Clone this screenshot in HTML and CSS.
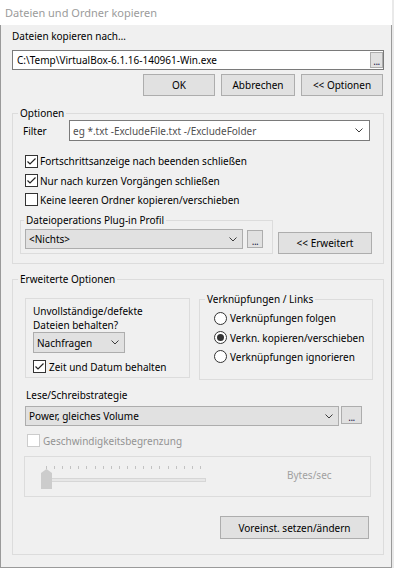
FILE: index.html
```html
<!DOCTYPE html>
<html lang="de">
<head>
<meta charset="utf-8">
<title>Dateien und Ordner kopieren</title>
<link rel="stylesheet" href="styles.css">
</head>
<body>
<div class="window">
  <div class="titlebar">Dateien und Ordner kopieren</div>
  <div class="dialog">
    <div class="top-label">Dateien kopieren nach…</div>
    <div class="pathbox">
      <span class="path-text">C:\Temp\VirtualBox-6.1.16-140961-Win.exe</span>
      <span class="mini-btn path-btn">...</span>
    </div>
    <div class="btn-row">
      <button class="btn btn-ok">OK</button>
      <button class="btn btn-cancel">Abbrechen</button>
      <button class="btn btn-opt">&lt;&lt; Optionen</button>
    </div>

    <fieldset class="group group-main">
      <legend>Optionen</legend>
      <div class="opts-body">
        <div class="filter-row">
          <span class="filter-label">Filter</span>
          <div class="combo edit filter-combo">
            <span class="combo-text placeholder">eg *.txt -ExcludeFile.txt -/ExcludeFolder</span>
            <svg class="chev" width="8" height="5" viewBox="0 0 8 5"><polyline points="0.5,0.5 4,4 7.5,0.5"/></svg>
          </div>
        </div>
        <div class="check-row row-a">
          <span class="cb"><svg width="11" height="11" viewBox="0 0 11 11"><polyline points="1.5,5.5 4,8 9.5,2.5"/></svg></span>
          <span>Fortschrittsanzeige nach beenden schließen</span>
        </div>
        <div class="check-row row-b">
          <span class="cb"><svg width="11" height="11" viewBox="0 0 11 11"><polyline points="1.5,5.5 4,8 9.5,2.5"/></svg></span>
          <span>Nur nach kurzen Vorgängen schließen</span>
        </div>
        <div class="check-row row-b">
          <span class="cb"></span>
          <span>Keine leeren Ordner kopieren/verschieben</span>
        </div>
        <div class="plugin-row">
          <fieldset class="group group-plugin">
            <legend>Dateioperations Plug-in Profil</legend>
            <div class="plugin-body">
              <div class="combo drop plugin-combo">
                <span class="combo-text">&lt;Nichts&gt;</span>
                <svg class="chev" width="8" height="5" viewBox="0 0 8 5"><polyline points="0.5,0.5 4,4 7.5,0.5"/></svg>
              </div>
              <span class="mini-btn plugin-btn">...</span>
            </div>
          </fieldset>
          <button class="btn btn-ext">&lt;&lt; Erweitert</button>
        </div>
      </div>
    </fieldset>

    <fieldset class="group group-main group-ext">
      <legend>Erweiterte Optionen</legend>
      <div class="ext-body">
        <div class="sub-row">
          <div class="box-keep">
            <div class="keep-text">Unvollständige/defekte<br>Dateien behalten?</div>
            <div class="combo drop keep-combo">
              <span class="combo-text">Nachfragen</span>
              <svg class="chev" width="8" height="5" viewBox="0 0 8 5"><polyline points="0.5,0.5 4,4 7.5,0.5"/></svg>
            </div>
            <div class="check-row row-keep">
              <span class="cb"><svg width="11" height="11" viewBox="0 0 11 11"><polyline points="1.5,5.5 4,8 9.5,2.5"/></svg></span>
              <span>Zeit und Datum behalten</span>
            </div>
          </div>
          <fieldset class="group group-links">
            <legend>Verknüpfungen / Links</legend>
            <div class="links-body">
              <div class="radio-row row-a"><span class="rb"></span><span>Verknüpfungen folgen</span></div>
              <div class="radio-row row-b"><span class="rb"><span class="rb-dot"></span></span><span>Verkn. kopieren/verschieben</span></div>
              <div class="radio-row row-b"><span class="rb"></span><span>Verknüpfungen ignorieren</span></div>
            </div>
          </fieldset>
        </div>
        <div class="strat-label">Lese/Schreibstrategie</div>
        <div class="strat-row">
          <div class="combo drop strat-combo">
            <span class="combo-text">Power, gleiches Volume</span>
            <svg class="chev" width="8" height="5" viewBox="0 0 8 5"><polyline points="0.5,0.5 4,4 7.5,0.5"/></svg>
          </div>
          <span class="mini-btn strat-btn">...</span>
        </div>
        <div class="check-row row-speed disabled">
          <span class="cb cb-disabled"></span>
          <span>Geschwindigkeitsbegrenzung</span>
        </div>
        <div class="slider-panel">
          <div class="slider">
            <div class="ticks"></div>
            <div class="track"></div>
            <svg class="thumb" width="11" height="20" viewBox="0 0 11 20"><polygon points="0,4 5.5,0 11,4 11,20 0,20"/></svg>
          </div>
          <span class="bytes">Bytes/sec</span>
        </div>
        <button class="btn btn-preset">Voreinst. setzen/ändern</button>
      </div>
    </fieldset>
  </div>
</div>
</body>
</html>
```

FILE: styles.css
```css
* {
  box-sizing: border-box;
}

html, body {
  margin: 0;
  padding: 0;
}

body {
  width: 394px;
  height: 568px;
  overflow: hidden;
  background: #e9e9e9;
  font-family: "Noto Sans", "Open Sans", sans-serif;
  font-size: 10px;
  line-height: 14px;
  color: #000;
}

.window {
  width: 392px;
  height: 568px;
  display: flex;
  flex-direction: column;
}

.titlebar {
  height: 25px;
  flex: none;
  background: #ffffff;
  color: #9b9b9b;
  font-size: 11px;
  line-height: 25px;
  padding-left: 5px;
}

.dialog {
  flex: 1;
  display: flex;
  flex-direction: column;
  background: #f0f0f0;
  border: 1px solid #9a9a9a;
  border-top: 0;
  padding: 4px 7px 0 11px;
}

.top-label {
  height: 14px;
}

.pathbox {
  margin-top: 7px;
  height: 20px;
  display: flex;
  align-items: center;
  background: #fff;
  border: 1px solid #7a7a7a;
  padding-left: 4px;
}

.path-text {
  flex: 1;
  white-space: nowrap;
}

.mini-btn {
  display: flex;
  justify-content: center;
  align-items: flex-end;
  background: #e1e1e1;
  border: 1px solid #adadad;
  color: #1a1a4a;
  font-size: 10px;
  line-height: 12px;
  letter-spacing: -0.5px;
}

.path-btn {
  width: 13px;
  height: 16px;
}

.btn-row {
  margin-top: 4px;
  display: flex;
  justify-content: flex-end;
  gap: 6px;
}

.btn {
  height: 22px;
  margin: 0;
  padding: 0;
  background: #e1e1e1;
  border: 1px solid #adadad;
  border-radius: 0;
  font: inherit;
  color: #000;
  text-align: center;
}

.btn-ok { width: 72px; }
.btn-cancel { width: 74px; }
.btn-opt { width: 82px; margin-right: 1px; }

/* group boxes */
.group {
  margin: 0;
  padding: 0;
  min-width: 0;
  border: 1px solid #dcdcdc;
}

.group > legend {
  padding: 0 2px;
  margin-left: 5px;
  line-height: 14px;
}

.group-main {
  margin-top: 10px;
}

.opts-body {
  padding: 0 0 9px 7px;
}

.filter-row {
  display: flex;
  align-items: center;
  height: 21px;
}

.filter-label {
  margin-left: 3px;
  width: 46px;
}

/* combos */
.combo {
  display: flex;
  align-items: center;
  padding: 0 5px 0 3px;
}

.combo.edit {
  background: #fff;
  border: 1px solid #7a7a7a;
}

.combo.drop {
  background: #e1e1e1;
  border: 1px solid #adadad;
}

.combo-text {
  flex: 1;
  white-space: nowrap;
  overflow: hidden;
}

.placeholder {
  color: #505050;
}

.chev {
  flex: none;
}

.chev polyline {
  fill: none;
  stroke: #3c3c3c;
  stroke-width: 1;
}

.filter-combo {
  width: 301px;
  height: 21px;
  padding-right: 6px;
}

/* check rows */
.check-row {
  display: flex;
  align-items: center;
  white-space: nowrap;
}

.group-main > .opts-body > .check-row {
  margin-left: 5px;
  gap: 2px;
}

.row-a { height: 20px; margin-top: 10px; }
.row-b { height: 19px; }

.cb {
  flex: none;
  width: 13px;
  height: 13px;
  background: #fff;
  border: 1px solid #333;
  display: flex;
}

.cb polyline {
  fill: none;
  stroke: #222;
  stroke-width: 1.2;
}

.cb-disabled {
  border-color: #cccccc;
}

/* plugin */
.plugin-row {
  margin-top: 4px;
  display: flex;
  align-items: flex-end;
}

.group-plugin {
  width: 253px;
}

.group-plugin > legend {
  margin-left: 3px;
}

.plugin-body {
  display: flex;
  align-items: flex-start;
  padding: 2px 0 4px 4px;
}

.plugin-combo {
  width: 218px;
  height: 20px;
}

.plugin-btn {
  width: 16px;
  height: 18px;
  margin: 1px 0 0 4px;
}

.btn-ext {
  width: 94px;
  margin-left: 5px;
}

/* extended */
.group-ext {
  margin-top: 8px;
}

.ext-body {
  display: flex;
  flex-direction: column;
  align-items: flex-start;
  padding: 0 14px 15px 12px;
}

.sub-row {
  margin-top: 6px;
  display: flex;
  align-items: flex-start;
}

.box-keep {
  margin-top: 6px;
  width: 165px;
  border: 1px solid #dcdcdc;
  padding: 5px 0 3px 7px;
}

.keep-combo {
  width: 92px;
  height: 21px;
}

.row-keep {
  margin-top: 6px;
  height: 15px;
  gap: 3px;
}

.group-links {
  margin-left: 9px;
  width: 174px;
}

.links-body {
  padding: 2px 0 13px 14px;
}

.radio-row {
  display: flex;
  align-items: center;
  gap: 3px;
  white-space: nowrap;
}

.links-body .row-a {
  margin-top: 0;
}

.rb {
  flex: none;
  width: 13px;
  height: 13px;
  border: 1px solid #333;
  border-radius: 50%;
  background: #fff;
  display: flex;
  align-items: center;
  justify-content: center;
}

.rb-dot {
  width: 7px;
  height: 7px;
  border-radius: 50%;
  background: #333;
}

.strat-label {
  margin-top: 8px;
  margin-left: 1px;
  height: 14px;
}

.strat-row {
  margin-top: 4px;
  display: flex;
  align-items: flex-start;
}

.strat-combo {
  width: 314px;
  height: 20px;
}

.strat-btn {
  width: 21px;
  height: 18px;
  margin-left: 2px;
}

.row-speed {
  margin-top: 6px;
  height: 17px;
  margin-left: 2px;
  gap: 3px;
}

.disabled {
  color: #939393;
}

/* slider */
.slider-panel {
  margin-top: 7px;
  margin-left: -1px;
  width: 347px;
  height: 41px;
  border: 1px solid #dcdcdc;
  display: flex;
  align-items: flex-start;
}

.slider {
  position: relative;
  width: 166px;
  margin-left: 15px;
}

.ticks {
  margin-top: 9px;
  margin-left: 6px;
  width: 155px;
  height: 3px;
  background: repeating-linear-gradient(90deg, #c2c2c2 0 1px, transparent 1px 8.1px);
}

.track {
  margin-top: 9px;
  margin-left: 1px;
  width: 165px;
  height: 4px;
  border: 1px solid #d6d6d6;
  background: #e7e7e7;
}

.thumb {
  position: absolute;
  left: 1px;
  top: 12px;
}

.thumb polygon {
  fill: #cccccc;
}

.bytes {
  margin-left: 81px;
  margin-top: 11px;
  color: #a0a0a0;
}

.btn-preset {
  margin-top: 19px;
  align-self: flex-end;
  width: 149px;
  height: 23px;
}
```
